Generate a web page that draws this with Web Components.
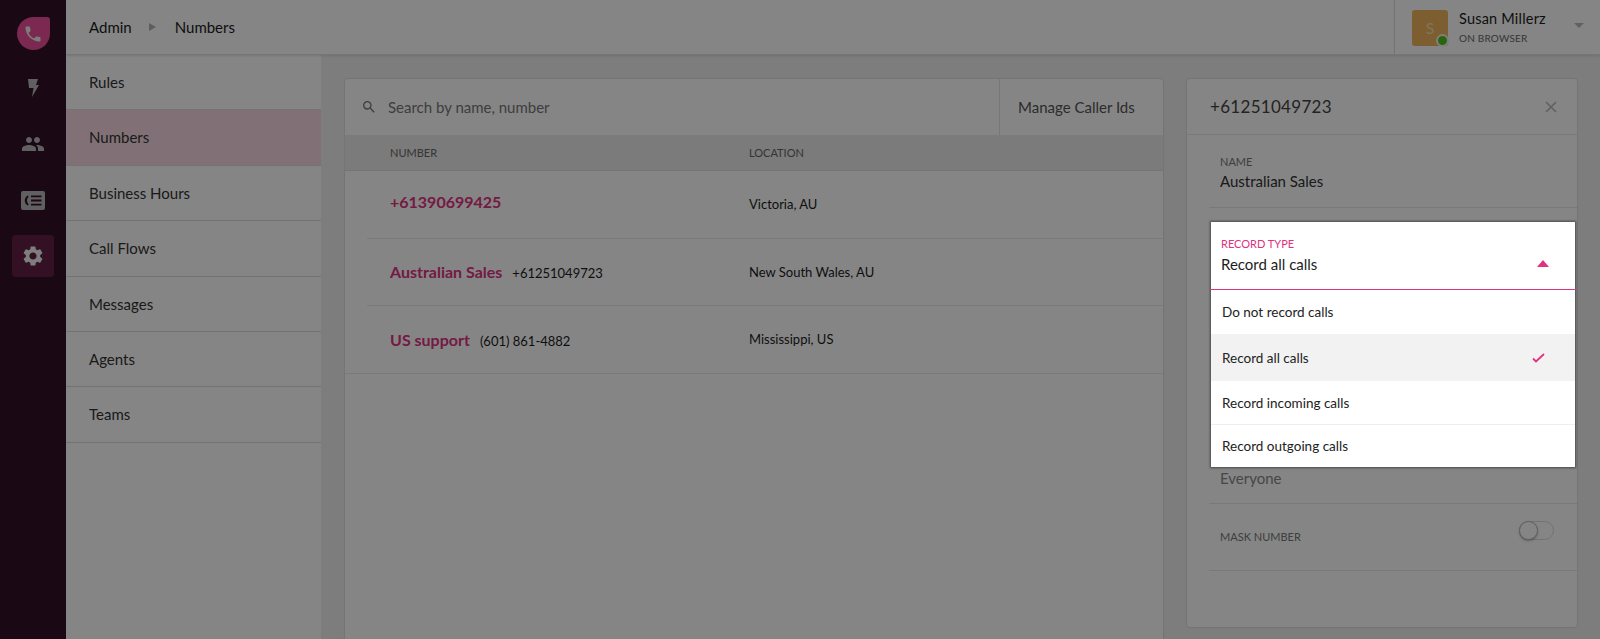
<!DOCTYPE html>
<html>
<head>
<meta charset="utf-8">
<title>Numbers</title>
<style>
html, body { margin: 0; height: 639px; overflow: hidden; background: #f0f0f0; }
body { font-family: Lato, "Open Sans", sans-serif; color: #1c1c1c; }
</style>
</head>
<body>
<app-shell></app-shell>

<script>
class AppRail extends HTMLElement {
    constructor() {
        super();
        this.attachShadow({ mode: 'open' }).innerHTML = `
        <style>
        :host { display: flex; flex-direction: column; align-items: center; width: 66px; flex: none; background: #32132a; height: 100%; }
        .logo { width: 33px; height: 33px; margin-top: 17px; background: #ee4f9c; border-radius: 50% 3px 50% 50%; display: flex; align-items: center; justify-content: center; }
        .item { width: 42px; height: 42px; border-radius: 4px; display: flex; align-items: center; justify-content: center; margin-top: 14px; }
        .item svg { fill: #b8b8b8; display: block; }
        .first { margin-top: 17px; }
        .on { background: #651f45; }
        .on svg { fill: #f2f2f2; }
        </style>
        <div class="logo"><svg width="20" height="20" viewBox="0 0 24 24" fill="#eee"><path d="M6.62 10.79c1.44 2.83 3.76 5.14 6.59 6.59l2.2-2.2c.27-.27.67-.36 1.02-.24 1.12.37 2.33.57 3.57.57.55 0 1 .45 1 1V20c0 .55-.45 1-1 1-9.39 0-17-7.61-17-17 0-.55.45-1 1-1h3.5c.55 0 1 .45 1 1 0 1.25.2 2.45.57 3.57.11.35.03.74-.25 1.02l-2.2 2.2z"/></svg></div>
        <div class="item first"><svg width="11" height="18" viewBox="0 0 11 18"><path d="M0 0h10L8 6h3L4 18l1.5-9H1z"/></svg></div>
        <div class="item"><svg width="24" height="24" viewBox="0 0 24 24"><path d="M16 11c1.66 0 2.99-1.34 2.99-3S17.66 5 16 5c-1.66 0-3 1.34-3 3s1.34 3 3 3zm-8 0c1.66 0 2.99-1.34 2.99-3S9.66 5 8 5C6.34 5 5 6.34 5 8s1.34 3 3 3zm0 2c-2.33 0-7 1.17-7 3.5V19h14v-2.5c0-2.33-4.67-3.5-7-3.5zm8 0c-.29 0-.62.02-.97.05 1.16.84 1.97 1.97 1.97 3.45V19h6v-2.5c0-2.33-4.67-3.5-7-3.5z"/></svg></div>
        <div class="item"><svg width="24" height="19" viewBox="0 0 24 19"><path fill-rule="evenodd" d="M2 0h20a2 2 0 0 1 2 2v15a2 2 0 0 1-2 2H2a2 2 0 0 1-2-2V2a2 2 0 0 1 2-2zm4.5 4.5C4.6 6 3.8 7.6 3.8 9.5s.8 3.500 2.700 5l1.300-1.200C6.500 12.200 6 11 6 9.500s.5-2.700 1.800-3.800zM10 4.500V6.300h10.500V4.500zm0 4.100v1.800h10.500V8.600zm0 4.100v1.800h10.500v-1.800z"/></svg></div>
        <div class="item on"><svg width="24" height="24" viewBox="0 0 24 24"><path d="M19.14 12.94c.04-.3.06-.61.06-.94 0-.32-.02-.64-.07-.94l2.03-1.58c.18-.14.23-.41.12-.61l-1.92-3.32c-.12-.22-.37-.29-.59-.22l-2.39.96c-.5-.38-1.03-.7-1.62-.94l-.36-2.54c-.04-.24-.24-.41-.48-.41h-3.84c-.24 0-.43.17-.47.41l-.36 2.54c-.59.24-1.13.57-1.62.94l-2.39-.96c-.22-.08-.47 0-.59.22L2.74 8.87c-.12.21-.08.47.12.61l2.03 1.58c-.05.3-.09.63-.09.94s.02.64.07.94l-2.03 1.58c-.18.14-.23.41-.12.61l1.92 3.32c.12.22.37.29.59.22l2.39-.96c.5.38 1.03.7 1.62.94l.36 2.54c.05.24.24.41.48.41h3.84c.24 0 .44-.17.47-.41l.36-2.54c.59-.24 1.13-.56 1.62-.94l2.39.96c.22.08.47 0 .59-.22l1.92-3.32c.12-.22.07-.47-.12-.61l-2.01-1.58zM12 15.6c-1.98 0-3.6-1.62-3.6-3.6s1.62-3.6 3.6-3.6 3.600 1.620 3.600 3.600-1.620 3.600-3.600 3.600z"/></svg></div>`;
    }
}

class AppTopbar extends HTMLElement {
    constructor() {
        super();
        this.attachShadow({ mode: 'open' }).innerHTML = `
        <style>
        :host { display: flex; align-items: stretch; height: 54px; flex: none; background: #fff; border-bottom: 1px solid #e2e2e2; box-shadow: 0 1px 2px rgba(0,0,0,.12); position: relative; z-index: 1; }
        .crumbs { flex: 1; display: flex; align-items: center; padding-left: 23px; font-size: 15px; color: #1c1c1c; }
        .arrow { width: 0; height: 0; border-left: 7px solid #b4b4b4; border-top: 4.500px solid transparent; border-bottom: 4.500px solid transparent; margin: 0 19px 0 17px; }
        .user { width: 206px; border-left: 1px solid #dcdcdc; display: flex; align-items: center; padding-left: 17px; box-sizing: border-box; position: relative; }
        .avatar { width: 36px; height: 36px; border-radius: 3px; background: #efb45c; color: #f6dcae; font-size: 16px; display: flex; align-items: center; justify-content: center; position: relative; flex: none; margin-top: 1px; }
        .dot { position: absolute; right: -1px; bottom: -1px; width: 9px; height: 9px; border-radius: 50%; background: #52c11c; border: 2px solid #f2f2f2; }
        .who { margin-left: 11px; }
        .name { font-size: 14.500px; line-height: 18px; color: #1c1c1c; letter-spacing: .2px; }
        .status { font-size: 10px; line-height: 13px; margin-top: 4px; color: #666; letter-spacing: .2px; }
        .caret { position: absolute; left: 179px; top: 23px; width: 0; height: 0; border-top: 5px solid #bbb; border-left: 5px solid transparent; border-right: 5px solid transparent; }
        </style>
        <div class="crumbs"><span>Admin</span><i class="arrow"></i><span>Numbers</span></div>
        <div class="user">
            <div class="avatar">S<span class="dot"></span></div>
            <div class="who"><div class="name">Susan Millerz</div><div class="status">ON BROWSER</div></div>
            <i class="caret"></i>
        </div>`;
    }
}

class AdminNav extends HTMLElement {
    constructor() {
        super();
        const items = ['Rules', 'Numbers', 'Business Hours', 'Call Flows', 'Messages', 'Agents', 'Teams'];
        const active = this.getAttribute('active');
        this.attachShadow({ mode: 'open' }).innerHTML = `
        <style>
        :host { display: block; width: 255px; flex: none; background: #fff; box-shadow: 1px 0 2px rgba(0,0,0,.1); }
        .row { height: 54.400px; line-height: 54.400px; padding-left: 23px; font-size: 15px; color: #333; border-bottom: 1px solid #dcdcdc; }
        .row.on { background: #f7d9e4; }
        </style>
        ${items.map(t => `<div class="row${t === active ? ' on' : ''}">${t}</div>`).join('')}`;
    }
}

class NumberRow extends HTMLElement {
    constructor() {
        super();
        this.attachShadow({ mode: 'open' }).innerHTML = `
        <style>
        :host { display: grid; grid-template-columns: 382px 1fr; height: 66.500px; margin-left: 22px; border-bottom: 1px solid #eaeaea; align-items: center; }
        :host([last]) { margin-left: 0; padding-left: 22px; }
        .num { padding-left: 23px; display: flex; align-items: baseline; gap: 10px; font-size: 13px; color: #1c1c1c; }
        :host([first]) .num { margin-top: -6px; }
        ::slotted([slot=name]) { font-size: 16px; font-weight: 700; color: #e0327f; }
        .loc { font-size: 13px; color: #1c1c1c; }
        </style>
        <div class="num"><slot name="name"></slot><slot name="phone"></slot></div>
        <div class="loc"><slot name="location"></slot></div>`;
    }
}

class NumbersCard extends HTMLElement {
    constructor() {
        super();
        this.attachShadow({ mode: 'open' }).innerHTML = `
        <style>
        :host { display: block; flex: 1; min-width: 0; background: #fff; border-radius: 3px; box-shadow: 0 0 2px rgba(0,0,0,.25); height: 700px; }
        .search { display: flex; height: 56px; align-items: stretch; font-size: 15px; }
        .box { flex: 1; display: flex; align-items: center; padding-left: 16px; color: #777; }
        .box svg { margin-right: 11px; fill: #777; flex: none; }
        .manage { width: 164px; box-sizing: border-box; border-left: 1px solid #e4e4e4; display: flex; align-items: center; padding-left: 18px; color: #555; }
        .head { display: grid; grid-template-columns: 404px 1fr; height: 35px; align-items: center; background: #ececec; border-bottom: 1px solid #e0e0e0; font-size: 11px; color: #666; padding-left: 45px; box-sizing: content-box; }
        .head span:first-child { margin-left: 0; }
        .head { grid-template-columns: 359px 1fr; }
        </style>
        <div class="search">
            <div class="box"><svg width="16" height="16" viewBox="0 0 24 24"><path d="M15.500 14h-.79l-.28-.27A6.470 6.470 0 0 0 16 9.500 6.500 6.500 0 1 0 9.500 16c1.610 0 3.090-.59 4.230-1.570l.27.28v.79l5 4.990L20.490 19l-4.990-5zm-6 0C7.010 14 5 11.990 5 9.500S7.010 5 9.500 5 14 7.010 14 9.500 11.990 14 9.500 14z"/></svg>Search by name, number</div>
            <div class="manage">Manage Caller Ids</div>
        </div>
        <div class="head"><span>NUMBER</span><span>LOCATION</span></div>
        <slot></slot>`;
    }
}

class DetailPanel extends HTMLElement {
    constructor() {
        super();
        this.attachShadow({ mode: 'open' }).innerHTML = `
        <style>
        :host { display: flex; flex-direction: column; width: 390px; height: 548px; flex: none; background: #fff; border-radius: 3px; box-shadow: 0 0 2px rgba(0,0,0,.25); color: #444; }
        .title { height: 55px; flex: none; border-bottom: 1px solid #e8e8e8; display: flex; align-items: center; justify-content: space-between; padding: 0 20px 0 23px; font-size: 17px; color: #444; letter-spacing: .3px; }
        .title svg { stroke: #bbb; stroke-width: 1.700; display: block; }
        .field { margin-left: 22px; border-bottom: 1px solid #e8e8e8; padding-left: 11px; box-sizing: border-box; }
        .label { font-size: 11px; color: #777; }
        .name { height: 73px; padding-top: 20px; }
        .name .val { font-size: 15px; color: #333; margin-top: 4px; }
        .hidden { height: 296px; display: flex; align-items: flex-end; font-size: 15px; color: #888; padding-bottom: 16px; }
        .mask { height: 67px; display: flex; align-items: center; justify-content: space-between; padding-right: 23px; }
        .toggle { width: 35px; height: 19px; box-sizing: border-box; border: 1px solid #ddd; border-radius: 10px; position: relative; margin-top: -14px; }
        .knob { position: absolute; left: -1px; top: -1px; width: 19px; height: 19px; box-sizing: border-box; border-radius: 50%; background: #fff; border: 1px solid #bbb; box-shadow: 0 1px 2px rgba(0,0,0,.3); }
        .mask .label { margin-top: -2px; }
        </style>
        <div class="title"><span>+61251049723</span><svg width="12" height="12" viewBox="0 0 12 12"><path d="M1 1l10 10M11 1L1 11"/></svg></div>
        <div class="field name"><div class="label">NAME</div><div class="val">Australian Sales</div></div>
        <div class="field hidden">Everyone</div>
        <div class="field mask"><span class="label">MASK NUMBER</span><span class="toggle"><i class="knob"></i></span></div>`;
    }
}

class RecordDropdown extends HTMLElement {
    constructor() {
        super();
        this.attachShadow({ mode: 'open' }).innerHTML = `
        <style>
        :host { display: block; position: absolute; left: 1211px; top: 222px; width: 364px; z-index: 20; background: #fff; box-shadow: 0 0 2px 1px rgba(0,0,0,.45); }
        .top { height: 68px; box-sizing: border-box; padding: 15px 10px 0; position: relative; border-bottom: 1.500px solid #e0327f; margin: 0 -1px; padding-left: 11px; }
        .label { font-size: 11px; line-height: 14px; color: #e0327f; }
        .val { font-size: 15px; line-height: 20px; color: #1c1c1c; margin-top: 3px; }
        .up { position: absolute; left: 327px; top: 38px; width: 0; height: 0; border-bottom: 7px solid #e0327f; border-left: 6px solid transparent; border-right: 6px solid transparent; }
        .opt { display: flex; align-items: center; justify-content: space-between; padding: 0 30px 0 11px; font-size: 13.500px; color: #222; }
        .o1 { height: 44px; }
        .o2 { height: 47px; background: #f2f2f2; }
        .o3 { height: 43px; border-bottom: 1px solid #eee; }
        .o4 { height: 42px; }
        svg { fill: none; stroke: #e0327f; stroke-width: 1.800; display: block; }
        </style>
        <div class="top"><div class="label">RECORD TYPE</div><div class="val">Record all calls</div><i class="up"></i></div>
        <div class="opt o1">Do not record calls</div>
        <div class="opt o2">Record all calls<svg width="13" height="10" viewBox="0 0 13 10"><path d="M1 5.500l3 3L12 1"/></svg></div>
        <div class="opt o3">Record incoming calls</div>
        <div class="opt o4">Record outgoing calls</div>`;
    }
}

class AppShell extends HTMLElement {
    constructor() {
        super();
        this.attachShadow({ mode: 'open' }).innerHTML = `
        <style>
        :host { display: flex; width: 1600px; height: 639px; position: relative; overflow: hidden; font-family: Lato, "Open Sans", sans-serif; }
        .col { flex: 1; display: flex; flex-direction: column; min-width: 0; }
        .body { flex: 1; display: flex; min-height: 0; }
        .content { flex: 1; display: flex; gap: 24px; padding: 24px 23px 0 24px; background: #f0f0f0; min-width: 0; }
        .dim { position: absolute; inset: 0; background: rgba(0,0,0,.48); z-index: 10; }
        </style>
        <app-rail></app-rail>
        <div class="col">
            <app-topbar></app-topbar>
            <div class="body">
                <admin-nav active="Numbers"></admin-nav>
                <div class="content">
                    <numbers-card>
                        <number-row first><span slot="name">+61390699425</span><span slot="location">Victoria, AU</span></number-row>
                        <number-row><span slot="name">Australian Sales</span><span slot="phone">+61251049723</span><span slot="location">New South Wales, AU</span></number-row>
                        <number-row last><span slot="name">US support</span><span slot="phone">(601) 861-4882</span><span slot="location">Mississippi, US</span></number-row>
                    </numbers-card>
                    <detail-panel></detail-panel>
                </div>
            </div>
        </div>
        <div class="dim"></div>
        <record-dropdown></record-dropdown>`;
    }
}

customElements.define('app-rail', AppRail);
customElements.define('app-topbar', AppTopbar);
customElements.define('admin-nav', AdminNav);
customElements.define('number-row', NumberRow);
customElements.define('numbers-card', NumbersCard);
customElements.define('detail-panel', DetailPanel);
customElements.define('record-dropdown', RecordDropdown);
customElements.define('app-shell', AppShell);
</script>
</body>
</html>
